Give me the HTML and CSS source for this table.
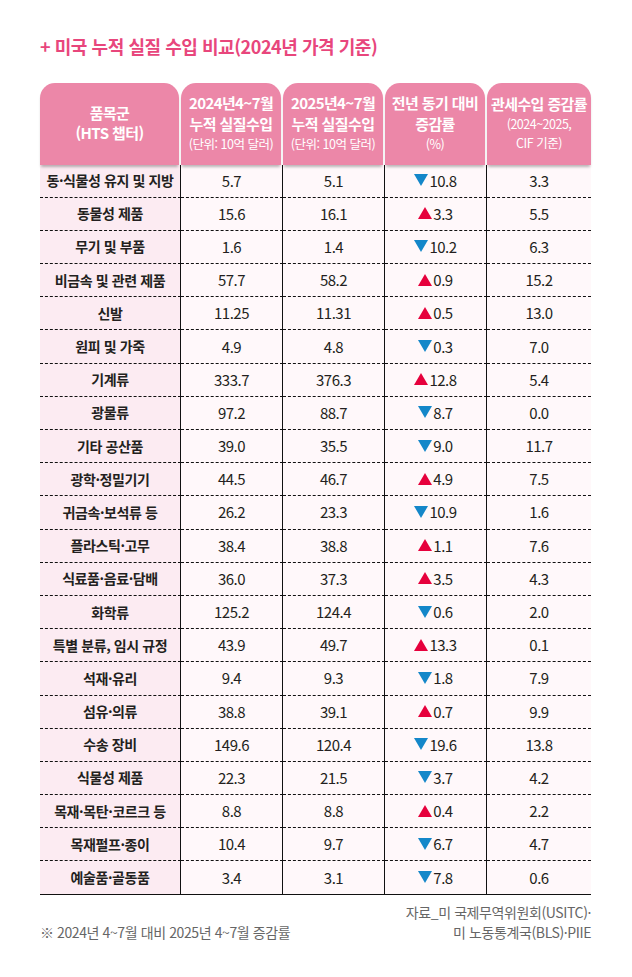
FILE: index.html
```html
<!DOCTYPE html>
<html lang="ko">
<head>
<meta charset="utf-8">
<link rel="stylesheet" href="styles.css">
</head>
<body>
<div class="page">
  <h1 class="title">+ 미국 누적 실질 수입 비교(2024년 가격 기준)</h1>
  <div class="table" id="tbl">
    <div class="hcell h1c"><span class="hm">품목군</span><span class="hm">(HTS 챕터)</span></div>
    <div class="hcell"><span class="hm">2024년4~7월</span><span class="hm">누적 실질수입</span><span class="hs">(단위: 10억 달러)</span></div>
    <div class="hcell"><span class="hm">2025년4~7월</span><span class="hm">누적 실질수입</span><span class="hs">(단위: 10억 달러)</span></div>
    <div class="hcell"><span class="hm">전년 동기 대비</span><span class="hm">증감률</span><span class="hs">(%)</span></div>
    <div class="hcell last"><span class="hm">관세수입 증감률</span><span class="hs">(2024~2025,</span><span class="hs">CIF 기준)</span></div>
  </div>
  <div class="foot">
    <p class="note">※ 2024년 4~7월 대비 2025년 4~7월 증감률</p>
    <p class="src">자료_미 국제무역위원회(USITC)·<br>미 노동통계국(BLS)·PIIE</p>
  </div>
</div>
<script src="app.js"></script>
</body>
</html>
```
FILE: app.js
```js
const rows = [
  ["동·식물성 유지 및 지방","5.7","5.1","d","10.8","3.3"],
  ["동물성 제품","15.6","16.1","u","3.3","5.5"],
  ["무기 및 부품","1.6","1.4","d","10.2","6.3"],
  ["비금속 및 관련 제품","57.7","58.2","u","0.9","15.2"],
  ["신발","11.25","11.31","u","0.5","13.0"],
  ["원피 및 가죽","4.9","4.8","d","0.3","7.0"],
  ["기계류","333.7","376.3","u","12.8","5.4"],
  ["광물류","97.2","88.7","d","8.7","0.0"],
  ["기타 공산품","39.0","35.5","d","9.0","11.7"],
  ["광학·정밀기기","44.5","46.7","u","4.9","7.5"],
  ["귀금속·보석류 등","26.2","23.3","d","10.9","1.6"],
  ["플라스틱·고무","38.4","38.8","u","1.1","7.6"],
  ["식료품·음료·담배","36.0","37.3","u","3.5","4.3"],
  ["화학류","125.2","124.4","d","0.6","2.0"],
  ["특별 분류, 임시 규정","43.9","49.7","u","13.3","0.1"],
  ["석재·유리","9.4","9.3","d","1.8","7.9"],
  ["섬유·의류","38.8","39.1","u","0.7","9.9"],
  ["수송 장비","149.6","120.4","d","19.6","13.8"],
  ["식물성 제품","22.3","21.5","d","3.7","4.2"],
  ["목재·목탄·코르크 등","8.8","8.8","u","0.4","2.2"],
  ["목재펄프·종이","10.4","9.7","d","6.7","4.7"],
  ["예술품·골동품","3.4","3.1","d","7.8","0.6"]
];
const up = '<svg class="tri" width="14" height="12" viewBox="0 0 14 12"><polygon points="7,0 14,12 0,12" fill="#e6003c"/></svg>';
const dn = '<svg class="tri" width="14" height="12" viewBox="0 0 14 12"><polygon points="0,0 14,0 7,12" fill="#1487c9"/></svg>';
const tbl = document.getElementById('tbl');
let html = '';
rows.forEach((r, i) => {
  const last = i === rows.length - 1 ? ' lastrow' : '';
  html += `<div class="cell c1${last}">${r[0]}</div>`;
  html += `<div class="cell${last}">${r[1]}</div>`;
  html += `<div class="cell${last}">${r[2]}</div>`;
  html += `<div class="cell${last}"><span class="chg">${r[3] === 'u' ? up : dn}${r[4]}</span></div>`;
  html += `<div class="cell c5${last}">${r[5]}</div>`;
});
tbl.insertAdjacentHTML('beforeend', html);
```
FILE: styles.css
```css
* { box-sizing: border-box; }
html, body { margin: 0; padding: 0; background: #fff; }
body {
  font-family: "Noto Sans CJK KR", "Noto Sans", sans-serif;
  color: #231f20;
}
.page {
  width: 632px;
  padding: 33px 41px 0 40px;
}
.title {
  margin: 0 0 23px 0;
  font-size: 18px;
  font-weight: 700;
  line-height: 27px;
  color: #e8467c;
  letter-spacing: -0.45px;
}
.table {
  display: grid;
  grid-template-columns: 141px 102px 102px 102px 104px;
  grid-template-rows: 81.5px;
  grid-auto-rows: 33.2px;
}
.hcell {
  position: relative;
  z-index: 1;
  margin-right: 2px;
  background: #ec87a8;
  border-radius: 15px 15px 0 0;
  color: #fff;
  display: flex;
  flex-direction: column;
  align-items: center;
  justify-content: center;
  text-align: center;
  box-shadow: 0 3px 3px -1px rgba(0,0,0,0.28);
  padding-bottom: 2px;
}
.hcell.last { margin-right: 0; }
.hm {
  font-size: 15px;
  font-weight: 700;
  line-height: 21px;
  letter-spacing: -0.6px;
  white-space: nowrap;
}
.hs {
  font-size: 12.5px;
  font-weight: 400;
  line-height: 19px;
  letter-spacing: -0.5px;
  white-space: nowrap;
}
.h1c .hm { line-height: 20px; }
.cell {
  background: #fff8fa;
  border-right: 1px solid #111;
  border-bottom: 1px dashed #111;
  display: flex;
  align-items: center;
  justify-content: center;
  font-size: 15px;
  letter-spacing: -0.5px;
  line-height: 1;
  padding-bottom: 1px;
}
.cell.c1 {
  background: #fcebf2;
  font-size: 14px;
  font-weight: 700;
  letter-spacing: -0.4px;
}
.cell.c5 { border-right: none; }
.cell.lastrow { border-bottom: 1px solid #111; }
.chg {
  display: inline-flex;
  align-items: center;
}
.tri { margin-right: 1px; display: block; }
.foot {
  display: flex;
  justify-content: space-between;
  align-items: flex-end;
  margin-top: 7px;
  color: #666;
  font-size: 14px;
  letter-spacing: -0.4px;
}
.foot p { margin: 0; }
.note { line-height: 20px; }
.src { text-align: right; line-height: 20px; }
```
